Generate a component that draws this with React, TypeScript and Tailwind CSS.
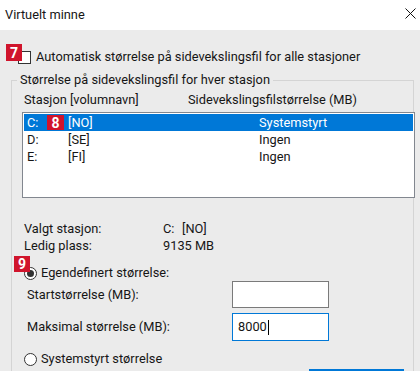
import React from 'react';

const Badge: React.FC<{ n: string; className: string }> = ({ n, className }) => (
  <span
    className={`absolute flex items-center justify-center bg-[#d0142c] text-white font-bold text-[14px] leading-none ${className}`}
  >
    {n}
  </span>
);

const Radio: React.FC<{ checked?: boolean }> = ({ checked }) => (
  <span className="flex h-[13px] w-[13px] items-center justify-center rounded-full border border-[#333] bg-white">
    {checked && <span className="h-[7px] w-[7px] rounded-full bg-[#333]" />}
  </span>
);

const drives = [
  { d: 'C:', name: '[NO]', size: 'Systemstyrt', selected: true },
  { d: 'D:', name: '[SE]', size: 'Ingen' },
  { d: 'E:', name: '[FI]', size: 'Ingen' },
];

export default function App() {
  return (
    <div className="w-[420px] h-[371px] overflow-hidden bg-[#ebebeb] text-[12.8px] leading-[16px] text-[#161616] font-['Roboto',sans-serif]">
      {/* title bar */}
      <div className="flex h-[30px] items-center justify-between bg-white pl-[5px] pr-[4px]">
        <span>Virtuelt minne</span>
        <svg width="11" height="11" viewBox="0 0 11 11" className="mb-[4px]">
          <path d="M0.5 0.5 L10.5 10.5 M10.5 0.5 L0.5 10.5" stroke="#111" strokeWidth="1" />
        </svg>
      </div>

      <div className="pl-[11px] pr-[6px]">
        {/* auto checkbox */}
        <div className="relative mt-[19px] flex h-[16px] items-center">
          <span className="ml-[7px] h-[13px] w-[13px] border border-[#333] bg-white" />
          <span className="ml-[5px]">Automatisk størrelse på sidevekslingsfil for alle stasjoner</span>
          <Badge n="7" className="left-[-5px] top-[-5px] h-[17px] w-[16px]" />
        </div>

        <fieldset className="mt-[7px] border border-b-0 border-[#d4d4d4]">
          <legend className="ml-[5px] px-[3px] leading-[16px]">Størrelse på sidevekslingsfil for hver stasjon</legend>

          <div className="mt-[4px] flex h-[16px] pl-[12px]">
            <span className="w-[164px]">Stasjon [volumnavn]</span>
            <span>Sidevekslingsfilstørrelse (MB)</span>
          </div>

          <div className="ml-[10px] mr-[-2px] mt-[4px] h-[86px] border border-[#82878f] bg-white p-px">
            {drives.map((r) => (
              <div
                key={r.d}
                className={`relative flex h-[17px] items-center pl-[3px] ${r.selected ? 'bg-[#0078d7] text-white' : ''}`}
              >
                <span className="w-[41px]">{r.d}</span>
                <span className="w-[191px]">{r.name}</span>
                <span>{r.size}</span>
                {r.selected && <Badge n="8" className="left-[23px] top-[1px] h-[15px] w-[17px]" />}
              </div>
            ))}
          </div>

          <div className="mt-[22px] pl-[12px]">
            <div className="flex h-[17px] items-center">
              <span className="w-[139px]">Valgt stasjon:</span>
              <span className="w-[19px]">C:</span>
              <span>[NO]</span>
            </div>
            <div className="flex h-[17px] items-center">
              <span className="w-[139px]">Ledig plass:</span>
              <span>9135 MB</span>
            </div>
          </div>

          <div className="relative mt-[11px] flex h-[16px] items-center pl-[12px]">
            <Radio checked />
            <span className="ml-[4px]">Egendefinert størrelse:</span>
            <Badge n="9" className="left-[2px] top-[-9px] h-[16px] w-[16px]" />
          </div>

          <div className="flex items-center pl-[15px]">
            <span className="w-[205px]">Startstørrelse (MB):</span>
            <span className="h-[27px] w-[97px] border border-[#7a7a7a] bg-white" />
          </div>

          <div className="mt-[5px] flex items-center pl-[15px]">
            <span className="w-[205px]">Maksimal størrelse (MB):</span>
            <span className="flex h-[28px] w-[97px] items-center border border-[#0078d7] bg-white pl-[5px]">
              8000<span className="ml-px h-[15px] w-px bg-black" />
            </span>
          </div>

          <div className="mt-[10px] flex h-[16px] items-center pl-[12px]">
            <Radio />
            <span className="ml-[4px]">Systemstyrt størrelse</span>
          </div>

          <div className="mt-[2px] flex justify-end pr-[9px]">
            <span className="h-[20px] w-[95px] border-2 border-[#0078d7] bg-[#e1e1e1]" />
          </div>
        </fieldset>
      </div>
    </div>
  );
}
